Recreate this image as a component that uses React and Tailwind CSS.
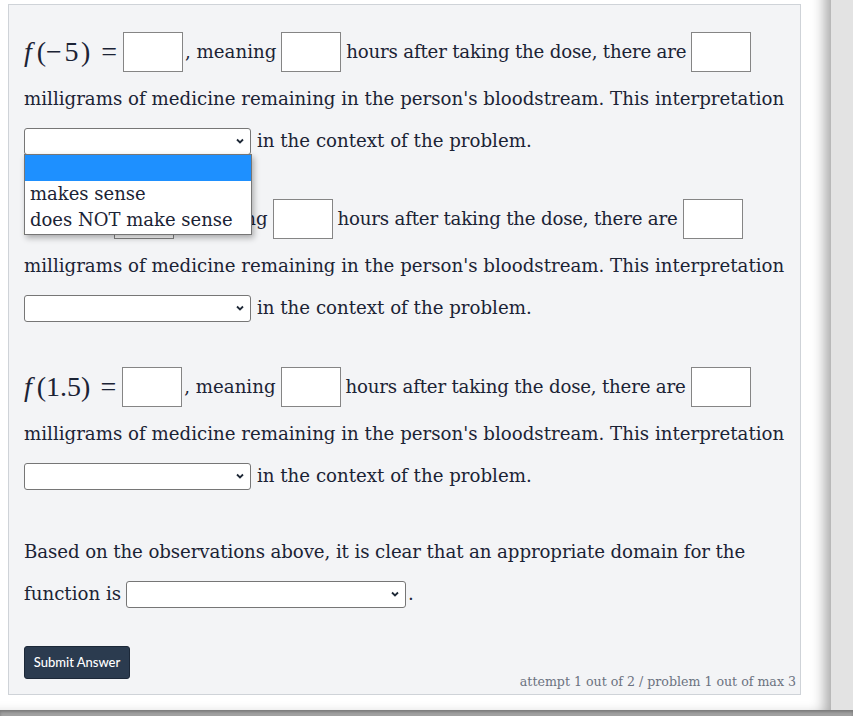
import React from "react";

const serif = "font-['DejaVu_Serif',serif]";

const Box = () => (
  <input
    type="text"
    className="w-[60px] h-[40px] border border-[#858585] bg-white shrink-0"
  />
);

const Chevron = () => (
  <svg
    className="absolute right-[6px] top-1/2 -translate-y-1/2 pointer-events-none"
    width="10"
    height="10"
    viewBox="0 0 10 10"
  >
    <path d="M2 3.5 L5 6.5 L8 3.5" fill="none" stroke="#1f2937" strokeWidth="1.8" />
  </svg>
);

const Select = ({ width, children }) => (
  <div className="relative shrink-0" style={{ width }}>
    <select className="appearance-none w-full h-[27px] border border-[#767676] rounded-[3px] bg-white block">
      <option></option>
      <option>makes sense</option>
      <option>does NOT make sense</option>
    </select>
    <Chevron />
    {children}
  </div>
);

// argClass / eqClass carry the spacing tweaks for each argument
const Math = ({ arg, argClass, eqClass }) => (
  <span className="font-['Liberation_Serif',serif] text-[28px] leading-none flex items-center whitespace-pre">
    <span className="italic">f</span>
    <span className="ml-[5px]">(</span>
    <span className={argClass}>{arg}</span>
    <span>)</span>
    <span className={eqClass}>=</span>
  </span>
);

const Group = ({ arg, argClass, eqClass, open }) => (
  <div>
    <div className="flex items-center h-[40px] whitespace-nowrap">
      <Math arg={arg} argClass={argClass} eqClass={eqClass} />
      <div className="ml-[6px]">
        <Box />
      </div>
      <span className="ml-[2px]">, meaning</span>
      <div className="ml-[5px]">
        <Box />
      </div>
      <span className="ml-[5px] tracking-[-0.2px]">hours after taking the dose, there are</span>
      <div className="ml-[5px]">
        <Box />
      </div>
    </div>
    <div className="flex items-center h-[30px] mt-[12px] whitespace-nowrap">
      milligrams of medicine remaining in the person's bloodstream. This interpretation
    </div>
    <div className="flex items-center h-[28px] mt-[13px] whitespace-nowrap">
      <Select width="227px">
        {open && (
          <div className="absolute left-0 top-[26px] w-[228px] bg-white border border-[#767676] shadow-[2px_3px_6px_rgba(0,0,0,0.3)] z-10 text-[18px] leading-[26px]">
            <div className="h-[26px] bg-[#1e90ff]"></div>
            <div className="px-[5px]">makes sense</div>
            <div className="px-[5px] pb-[1px]">does NOT make sense</div>
          </div>
        )}
      </Select>
      <span className="ml-[6px]">in the context of the problem.</span>
    </div>
  </div>
);

export default function App() {
  return (
    <div className="w-[853px] h-[716px] bg-[#e3e3e3] overflow-hidden flex flex-col">
      <div className="w-[831px] h-[710px] shrink-0 bg-white shadow-[inset_-18px_-6px_14px_-12px_rgba(0,0,0,0.35)] pt-[4px] pl-[8px]">
        <div
          className={`w-[793px] h-[691px] border border-[#cfd3d8] bg-[#f3f4f6] pl-[15px] pr-[4px] pt-[27px] text-[18.2px] text-[#1b2335] ${serif}`}
        >
          <Group arg="−5" argClass="tracking-[2.5px]" eqClass="ml-[11px]" open />
          <div className="mt-[44px]">
            <Group arg="10" argClass="" eqClass="ml-[9px]" />
          </div>
          <div className="mt-[45px]">
            <Group arg="1.5" argClass="" eqClass="ml-[10px]" />
          </div>
          <div className="flex items-center h-[30px] mt-[47px] whitespace-nowrap tracking-[-0.1px]">
            Based on the observations above, it is clear that an appropriate domain for the
          </div>
          <div className="flex items-center h-[28px] mt-[13px] whitespace-nowrap">
            <span>function is</span>
            <div className="ml-[5px]">
              <Select width="280px" />
            </div>
            <span className="ml-[2px]">.</span>
          </div>
          <div className="flex justify-between items-end mt-[38px]">
            <button className="h-[33px] w-[106px] rounded-[3px] bg-[#2b3b4f] text-white text-[13px] font-medium font-['Lato',sans-serif] border border-[#1c2838]">
              Submit Answer
            </button>
            <span className="text-[12.6px] text-[#6b7280] mb-[-13px]">
              attempt 1 out of 2 / problem 1 out of max 3
            </span>
          </div>
        </div>
      </div>
      <div className="h-[6px] bg-[#a3a3a3] shadow-[inset_0_2px_3px_rgba(0,0,0,0.25)]"></div>
    </div>
  );
}
